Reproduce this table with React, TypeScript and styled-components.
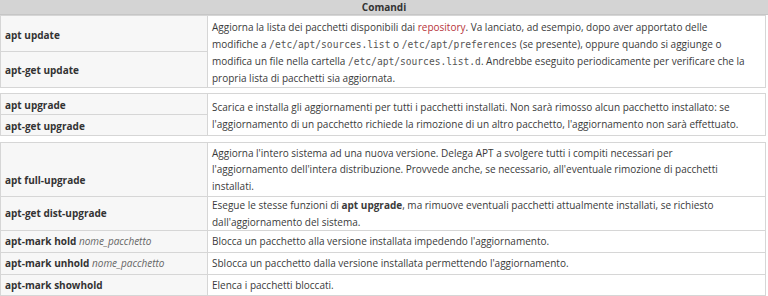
import React from "react";
import styled, { createGlobalStyle } from "styled-components";

const Global = createGlobalStyle`
  html, body { margin: 0; padding: 0; background: #ffffff; }
  body { font-family: "Open Sans", "Noto Sans", sans-serif; color: #333333; }
`;

const Page = styled.div`
  width: 768px;
  height: 296px;
  overflow: hidden;
  display: flex;
  flex-direction: column;
`;

const Header = styled.div`
  height: 21px;
  background: #d4d4d4;
  border-bottom: 1px solid #c6c6c6;
  display: flex;
  align-items: center;
  justify-content: center;
  font-weight: 700;
  font-size: 10px;
  color: #333;
`;

const Group = styled.table<{ $gap: number; $lh?: number }>`
  width: 766px;
  margin-top: ${(p) => p.$gap}px;
  border-collapse: collapse;
  table-layout: fixed;
  font-size: 10px;
  line-height: ${(p) => p.$lh ?? 16.5}px;
  border: 1px solid #cfcfcf;
`;

const Row = styled.tr<{ $h: number }>`
  height: ${(p) => p.$h}px;
`;

const Cmd = styled.td<{ $drop?: number }>`
  background: #f7f7f7;
  border: 1px solid #d6d6d6;
  padding: ${(p) => p.$drop ?? 0}px 4px 0;
  font-weight: 700;
  color: #333;
  vertical-align: middle;
  white-space: nowrap;
`;

const Desc = styled.td<{ $drop?: number }>`
  background: #ffffff;
  border: 1px solid #d6d6d6;
  padding: ${(p) => p.$drop ?? 0}px 3px 0 4px;
  color: #3a3a3a;
  vertical-align: middle;
  white-space: nowrap;
  overflow: hidden;
`;

const Arg = styled.span`
  font-weight: 400;
  font-style: italic;
  color: #666;
`;

const Code = styled.code`
  font-family: "DejaVu Sans Mono", "Liberation Mono", monospace;
  font-size: 9.6px;
  color: #555;
`;

const Link = styled.span`
  color: #b8333a;
`;

const Cols = () => (
  <colgroup>
    <col style={{ width: 207 }} />
    <col />
  </colgroup>
);

export default function App() {
  return (
    <>
      <Global />
      <Page>
        <Header>Comandi</Header>
        <Group $gap={0} $lh={17}>
          <Cols />
          <tbody>
            <Row $h={34}>
              <Cmd $drop={3}>apt update</Cmd>
              <Desc rowSpan={2} $drop={3}>
                Aggiorna la lista dei pacchetti disponibili dai <Link>repository</Link>. Va lanciato, ad esempio, dopo aver apportato delle
                <br />
                modifiche a <Code>/etc/apt/sources.list</Code> o <Code>/etc/apt/preferences</Code> (se presente), oppure quando si aggiunge o
                <br />
                modifica un file nella cartella <Code>/etc/apt/sources.list.d</Code>. Andrebbe eseguito periodicamente per verificare che la
                <br />
                propria lista di pacchetti sia aggiornata.
              </Desc>
            </Row>
            <Row $h={34}>
              <Cmd $drop={2}>apt-get update</Cmd>
            </Row>
          </tbody>
        </Group>
        <Group $gap={5}>
          <Cols />
          <tbody>
            <Row $h={21}>
              <Cmd $drop={2}>apt upgrade</Cmd>
              <Desc rowSpan={2} $drop={2}>
                Scarica e installa gli aggiornamenti per tutti i pacchetti installati. Non sarà rimosso alcun pacchetto installato: se
                <br />
                l'aggiornamento di un pacchetto richiede la rimozione di un altro pacchetto, l'aggiornamento non sarà effettuato.
              </Desc>
            </Row>
            <Row $h={21}>
              <Cmd $drop={2}>apt-get upgrade</Cmd>
            </Row>
          </tbody>
        </Group>
        <Group $gap={6}>
          <Cols />
          <tbody>
            <Row $h={54}>
              <Cmd $drop={22}>apt full-upgrade</Cmd>
              <Desc>
                Aggiorna l'intero sistema ad una nuova versione. Delega APT a svolgere tutti i compiti necessari per
                <br />
                l'aggiornamento dell'intera distribuzione. Provvede anche, se necessario, all'eventuale rimozione di pacchetti
                <br />
                installati.
              </Desc>
            </Row>
            <Row $h={31}>
              <Cmd>apt-get dist-upgrade</Cmd>
              <Desc>
                Esegue le stesse funzioni di <b>apt upgrade</b>, ma rimuove eventuali pacchetti attualmente installati, se richiesto
                <br />
                dall'aggiornamento del sistema.
              </Desc>
            </Row>
            <Row $h={22}>
              <Cmd>
                apt-mark hold <Arg>nome_pacchetto</Arg>
              </Cmd>
              <Desc>Blocca un pacchetto alla versione installata impedendo l'aggiornamento.</Desc>
            </Row>
            <Row $h={22}>
              <Cmd>
                apt-mark unhold <Arg>nome_pacchetto</Arg>
              </Cmd>
              <Desc>Sblocca un pacchetto dalla versione installata permettendo l'aggiornamento.</Desc>
            </Row>
            <Row $h={21}>
              <Cmd>apt-mark showhold</Cmd>
              <Desc>Elenca i pacchetti bloccati.</Desc>
            </Row>
          </tbody>
        </Group>
      </Page>
    </>
  );
}
